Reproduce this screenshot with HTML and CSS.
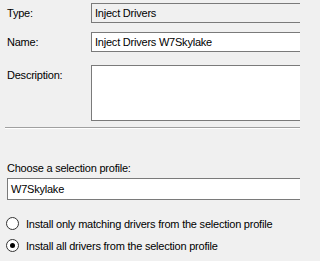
FILE: index.html
```html
<!DOCTYPE html>
<html>
<head>
<meta charset="utf-8">
<link rel="stylesheet" href="styles.css">
</head>
<body>
<div class="page">
  <div class="form">
    <div class="row">
      <span class="lbl">Type:</span>
      <div class="field ro">Inject Drivers</div>
    </div>
    <div class="row">
      <span class="lbl">Name:</span>
      <div class="field">Inject Drivers W7Skylake</div>
    </div>
    <div class="row row-top">
      <span class="lbl lbl-top">Description:</span>
      <div class="field area"></div>
    </div>
  </div>
  <div class="sep"></div>
  <div class="profile">
    <div class="caption">Choose a selection profile:</div>
    <div class="field combo">W7Skylake</div>
  </div>
  <div class="radios">
    <div class="radio"><span class="dot"></span><span>Install only matching drivers from the selection profile</span></div>
    <div class="radio"><span class="dot checked"></span><span>Install all drivers from the selection profile</span></div>
  </div>
</div>
</body>
</html>
```
FILE: styles.css
```css
html, body {
  margin: 0;
  padding: 0;
  background: #f0f0f0;
  overflow: hidden;
}
body {
  font-family: "Liberation Sans", Arial, sans-serif;
  font-size: 11px;
  letter-spacing: -0.22px;
  color: #000;
}
.page {
  width: 300px;
  height: 261px;
  overflow: hidden;
}
.form {
  padding-top: 3px;
  display: flex;
  flex-direction: column;
  gap: 9px;
}
.row {
  display: flex;
  align-items: center;
  padding-left: 7px;
}
.row-top {
  align-items: flex-start;
  margin-top: 4px;
}
.lbl {
  width: 84px;
  flex: none;
  line-height: 13px;
}
.lbl-top {
  padding-top: 4px;
}
.field {
  box-sizing: border-box;
  border: 1px solid #7a7a7a;
  border-right: none;
  background: #fff;
  height: 20px;
  flex: 1;
  min-width: 0;
  padding: 0 3px;
  display: flex;
  align-items: center;
  white-space: nowrap;
  overflow: hidden;
}
.field.ro {
  background: #f0f0f0;
}
.field.area {
  height: 56px;
}
.sep {
  margin: 6px 0 0 5px;
  height: 1px;
  border-top: 1px solid #a0a0a0;
  background: #fff;
}
.profile {
  padding: 33px 0 0 7px;
}
.caption {
  line-height: 13px;
}
.field.combo {
  margin-top: 3px;
  height: 22px;
}
.radios {
  padding: 17px 0 0 6px;
  display: flex;
  flex-direction: column;
  gap: 9px;
}
.radio {
  display: flex;
  align-items: center;
  gap: 7px;
  white-space: nowrap;
  height: 13px;
}
.dot {
  box-sizing: border-box;
  width: 13px;
  height: 13px;
  border-radius: 50%;
  border: 1px solid #333;
  background: #fff;
  flex: none;
  display: flex;
  align-items: center;
  justify-content: center;
}
.dot.checked::after {
  content: "";
  width: 5px;
  height: 5px;
  border-radius: 50%;
  background: #000;
}
```
